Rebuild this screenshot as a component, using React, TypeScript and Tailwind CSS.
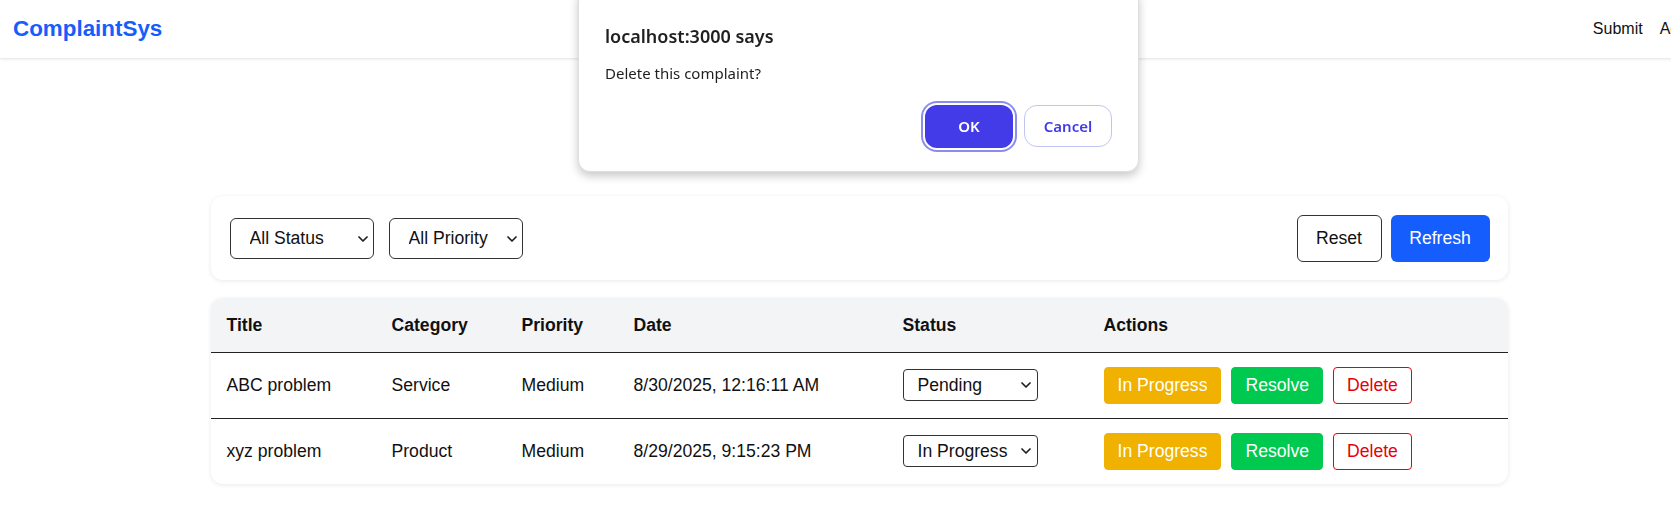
import React from "react";

type Complaint = {
  title: string;
  category: string;
  priority: string;
  date: string;
  status: string;
};

const complaints: Complaint[] = [
  { title: "ABC problem", category: "Service", priority: "Medium", date: "8/30/2025, 12:16:11 AM", status: "Pending" },
  { title: "xyz problem", category: "Product", priority: "Medium", date: "8/29/2025, 9:15:23 PM", status: "In Progress" },
];

function Chevron({ className }: { className: string }) {
  return (
    <svg className={className} width="10" height="6" viewBox="0 0 10 6" fill="none">
      <path d="M1 1l4 4 4-4" stroke="#1f1f1f" strokeWidth="1.7" strokeLinecap="round" strokeLinejoin="round" />
    </svg>
  );
}

function FilterSelect({ value, options, width }: { value: string; options: string[]; width: string }) {
  return (
    <div className={`relative ${width}`}>
      <select
        defaultValue={value}
        className="w-full h-[41px] appearance-none rounded-[6px] border border-[#333] bg-white pl-[19px] text-[17.6px] text-[#111] outline-none"
      >
        {options.map((o) => (
          <option key={o}>{o}</option>
        ))}
      </select>
      <Chevron className="pointer-events-none absolute right-[6px] top-[18px]" />
    </div>
  );
}

export default function App() {
  return (
    <div className="w-full overflow-hidden bg-white min-h-screen font-['Liberation_Sans',Arial,sans-serif] text-[#111]">
      <div className="w-[1718px]">
        <header className="h-[58px] flex items-center justify-between px-[13px] bg-white shadow-[0_1px_3px_rgba(0,0,0,0.12)]">
          <span className="text-[22.4px] font-bold text-[#155dfc]">ComplaintSys</span>
          <nav className="flex gap-[17px] text-[16px] text-[#111]">
            <a>Submit</a>
            <a>Admin</a>
          </nav>
        </header>

        <main className="w-[1297px] mx-auto pt-[138px] pb-12">
          <div className="h-[84px] flex items-center justify-between pl-[19px] pr-[18px] bg-white rounded-[12px] shadow-[0_1px_5px_rgba(0,0,0,0.09)]">
            <div className="flex gap-[15px]">
              <FilterSelect value="All Status" options={["All Status", "Pending", "In Progress", "Resolved"]} width="w-[144px]" />
              <FilterSelect value="All Priority" options={["All Priority", "Low", "Medium", "High"]} width="w-[134px]" />
            </div>
            <div className="flex gap-[9px] text-[17.6px]">
              <button className="w-[85px] h-[47px] rounded-[6px] border border-[#333] bg-white text-[#111]">Reset</button>
              <button className="w-[99px] h-[47px] rounded-[6px] bg-[#155dfc] text-white">Refresh</button>
            </div>
          </div>

          <div className="mt-[18px] bg-white rounded-[12px] overflow-hidden shadow-[0_1px_5px_rgba(0,0,0,0.09)]">
            <table className="w-full table-fixed border-collapse text-[17.6px]">
              <thead>
                <tr className="bg-[#f3f4f6] border-b border-[#222]">
                  <th className="w-[165px] h-[54px] px-4 text-left font-bold">Title</th>
                  <th className="w-[130px] px-4 text-left font-bold">Category</th>
                  <th className="w-[112px] px-4 text-left font-bold">Priority</th>
                  <th className="w-[269px] px-4 text-left font-bold">Date</th>
                  <th className="w-[201px] px-4 text-left font-bold">Status</th>
                  <th className="px-4 text-left font-bold">Actions</th>
                </tr>
              </thead>
              <tbody>
                {complaints.map((c, i) => (
                  <tr key={c.title} className={i < complaints.length - 1 ? "border-b border-[#222]" : ""}>
                    <td className="h-[66px] px-4">{c.title}</td>
                    <td className="px-4">{c.category}</td>
                    <td className="px-4">{c.priority}</td>
                    <td className="px-4">{c.date}</td>
                    <td className="px-4">
                      <div className="relative w-[135px]">
                        <select
                          defaultValue={c.status}
                          className="w-full h-[32px] appearance-none rounded-[4px] border border-[#333] bg-white pl-[14px] text-[17.6px] text-[#111] outline-none"
                        >
                          <option>Pending</option>
                          <option>In Progress</option>
                          <option>Resolved</option>
                        </select>
                        <Chevron className="pointer-events-none absolute right-[7px] top-[13px]" />
                      </div>
                    </td>
                    <td className="px-4">
                      <div className="flex gap-[10px]">
                        <button className="h-[37px] px-[13px] rounded-[4px] border border-[#f0b100] bg-[#f0b100] text-white">In Progress</button>
                        <button className="h-[37px] px-[13px] rounded-[4px] border border-[#00c950] bg-[#00c950] text-white">Resolve</button>
                        <button className="h-[37px] px-[13px] rounded-[4px] border border-[#e7000b] bg-white text-[#e7000b]">Delete</button>
                      </div>
                    </td>
                  </tr>
                ))}
              </tbody>
            </table>
          </div>
        </main>
      </div>

      <div className="fixed left-[578px] top-[-12px] w-[561px] h-[184px] bg-white rounded-[12px] border border-[#dedede] shadow-[0_4px_10px_rgba(0,0,0,0.22)] px-[26px] pt-[35px] font-['Noto_Sans',sans-serif] text-[#1f1f1f]">
        <div className="text-[18px] leading-[24px] font-semibold">localhost:3000 says</div>
        <div className="mt-[15px] text-[15px] leading-[20px]">Delete this complaint?</div>
        <div className="mt-[22px] flex justify-end items-start gap-[11px]">
          <button className="w-[88px] h-[43px] rounded-[12px] bg-[#433ae8] text-white text-[15px] font-semibold ring-2 ring-[#8b8cf0] ring-offset-2">
            OK
          </button>
          <button className="w-[88px] h-[42px] rounded-[13px] border border-[#c3c4f4] bg-white text-[#433ae8] text-[15px] font-semibold">
            Cancel
          </button>
        </div>
      </div>
    </div>
  );
}
